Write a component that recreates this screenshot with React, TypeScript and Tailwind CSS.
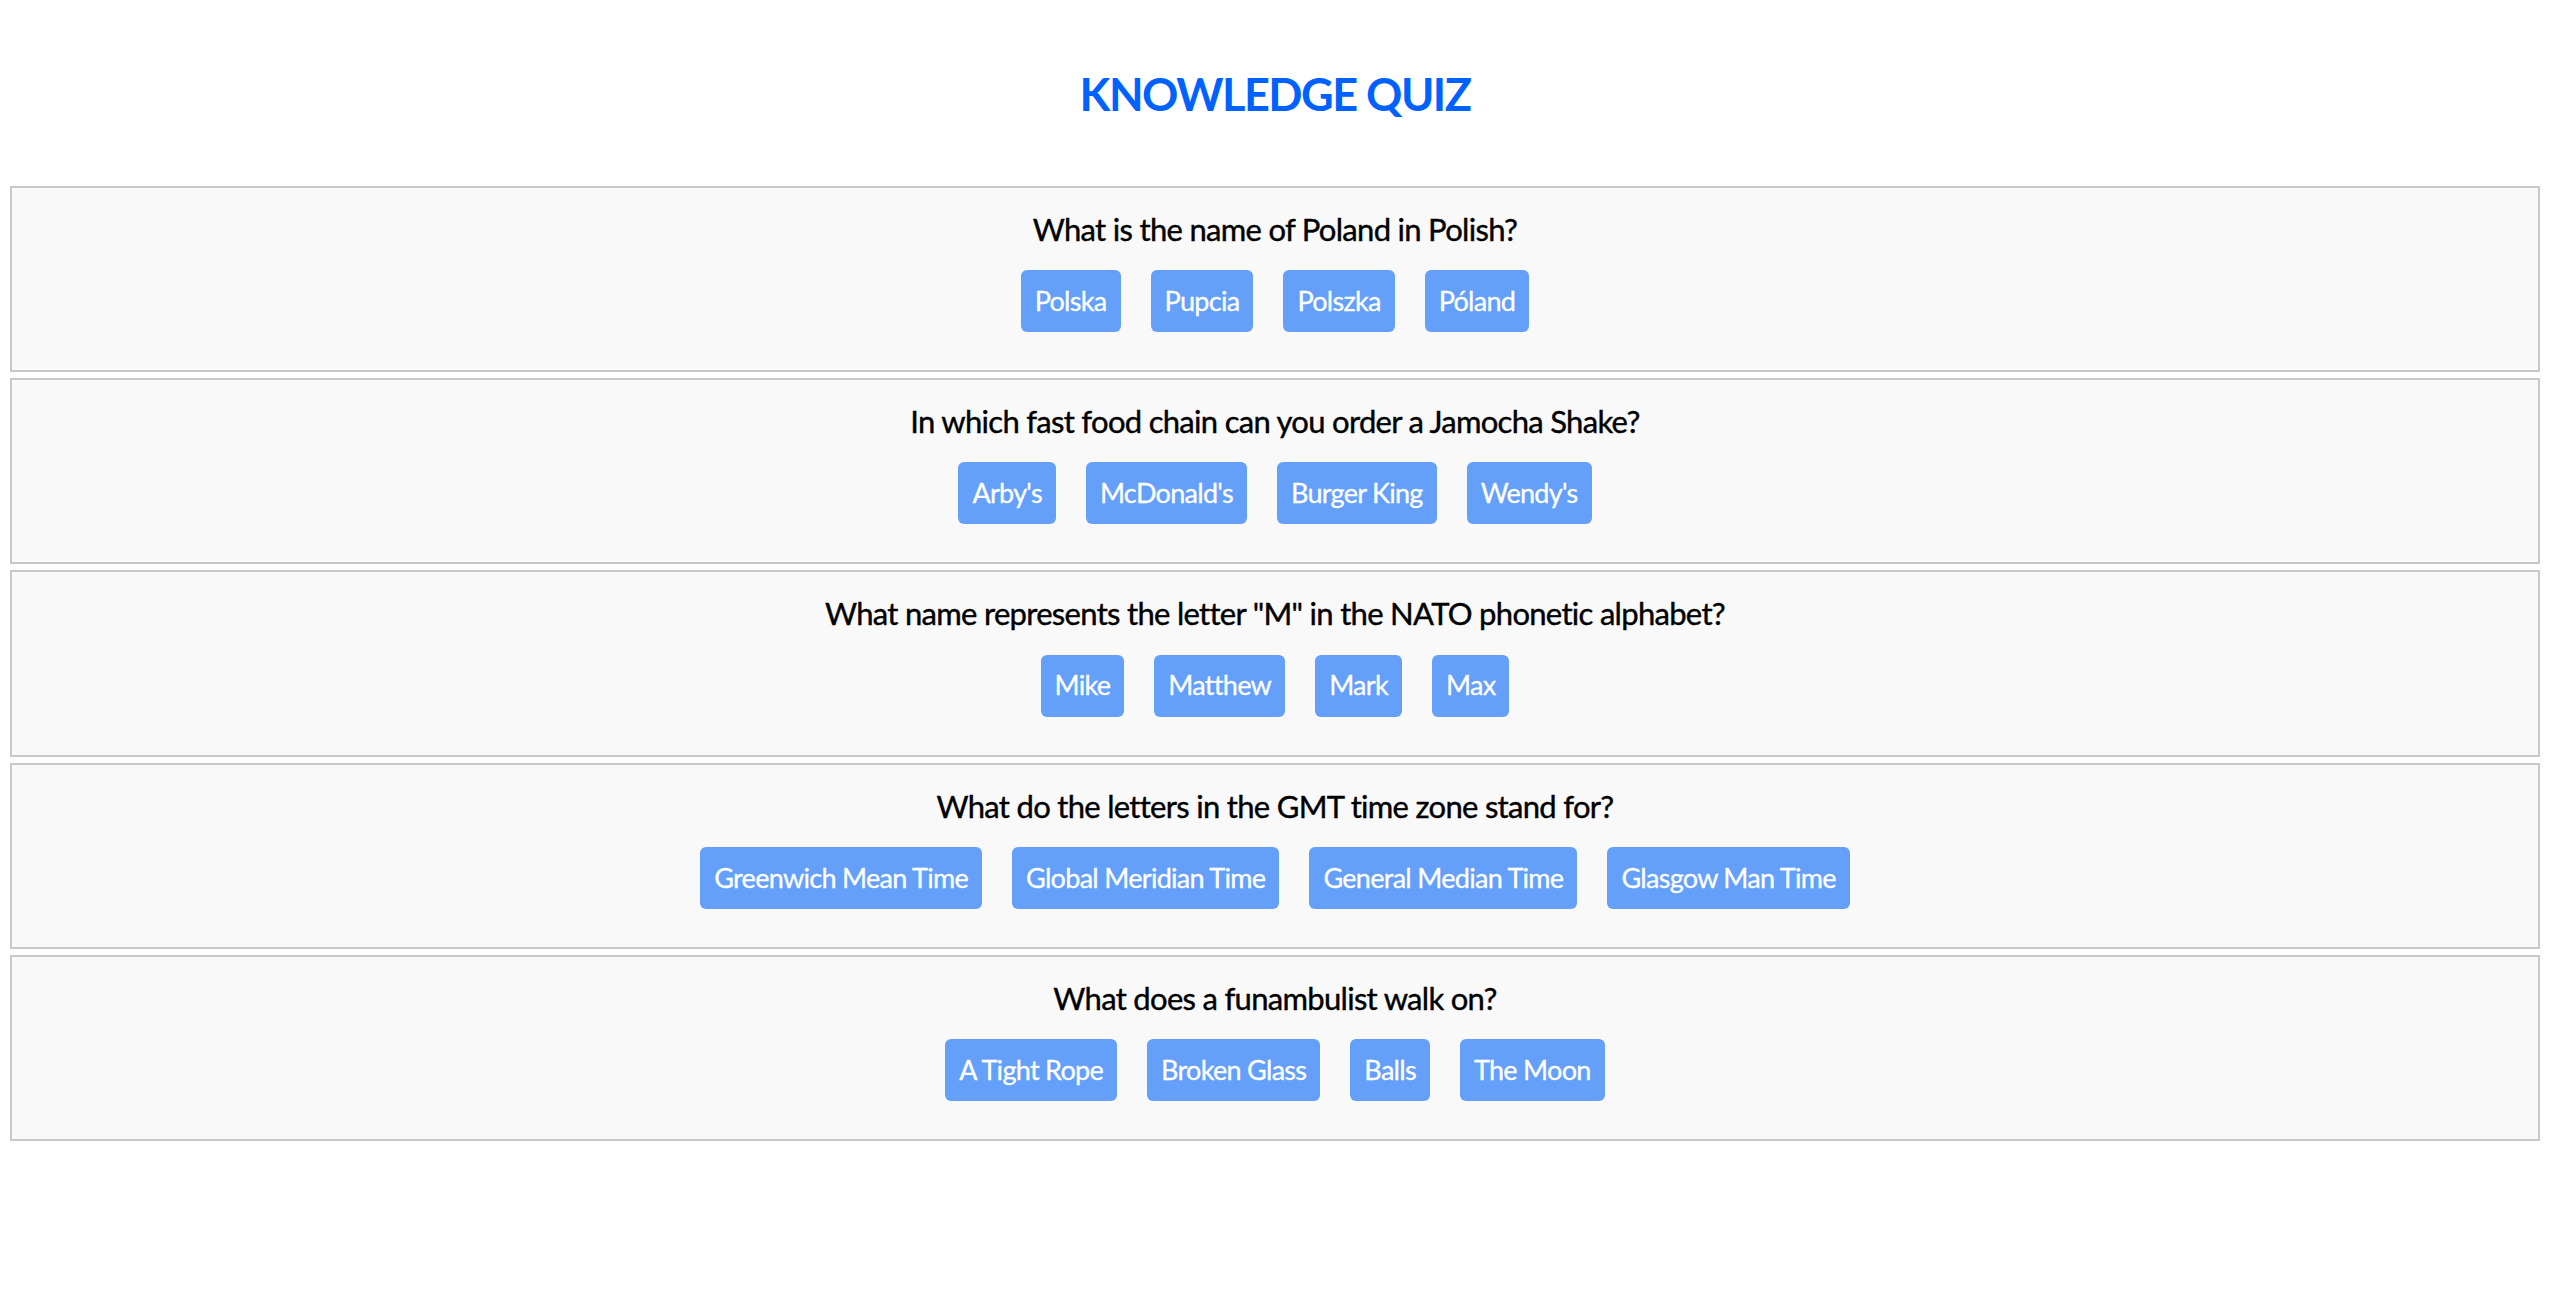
const questions = [
  {
    question: 'What is the name of Poland in Polish?',
    answers: ['Polska', 'Pupcia', 'Polszka', 'Póland'],
  },
  {
    question: 'In which fast food chain can you order a Jamocha Shake?',
    answers: ["Arby's", "McDonald's", 'Burger King', "Wendy's"],
  },
  {
    question: 'What name represents the letter "M" in the NATO phonetic alphabet?',
    answers: ['Mike', 'Matthew', 'Mark', 'Max'],
  },
  {
    question: 'What do the letters in the GMT time zone stand for?',
    answers: ['Greenwich Mean Time', 'Global Meridian Time', 'General Median Time', 'Glasgow Man Time'],
  },
  {
    question: 'What does a funambulist walk on?',
    answers: ['A Tight Rope', 'Broken Glass', 'Balls', 'The Moon'],
  },
];

export default function App() {
  return (
    <div className="min-h-screen bg-white px-[10px] font-['Lato',sans-serif]">
      <h1 className="pt-[67px] text-center text-[45px] font-bold leading-[1.2] tracking-[-1.5px] text-[#0062fe]">
        KNOWLEDGE QUIZ
      </h1>

      <div className="mt-[65px] flex flex-col gap-[6px]">
        {questions.map((q) => (
          <div
            key={q.question}
            className="border-2 border-[#c8c8c8] bg-[#f9f9f9] pt-[23px] pb-[38px] text-center"
          >
            <p className="text-[31px] leading-[1.2] tracking-[-0.7px] text-black [-webkit-text-stroke:0.4px_black]">
              {q.question}
            </p>
            <div className="mt-[22px] flex justify-center gap-[30px]">
              {q.answers.map((a) => (
                <button
                  key={a}
                  className="h-[62px] rounded-[6px] bg-[#64a0fa] px-[14px] text-[27px] leading-[1.2] tracking-[-0.7px] text-white [-webkit-text-stroke:0.3px_white]"
                >
                  {a}
                </button>
              ))}
            </div>
          </div>
        ))}
      </div>
    </div>
  );
}
